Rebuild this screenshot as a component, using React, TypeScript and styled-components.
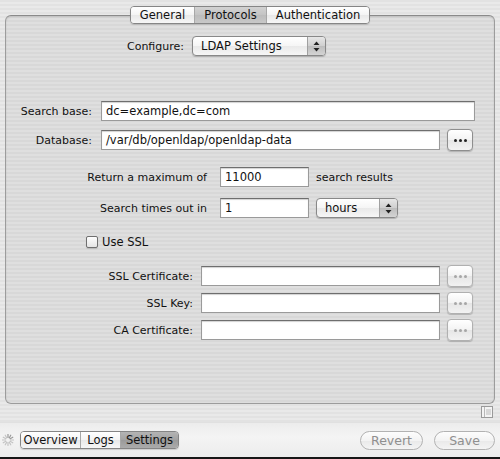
import React from 'react';
import styled, { createGlobalStyle } from 'styled-components';

const GlobalStyle = createGlobalStyle`
  body {
    margin: 0;
    font-family: "DejaVu Sans", "Noto Sans", sans-serif;
    font-size: 11px;
    color: #111;
  }
`;

const stripes = (a: string, b: string) =>
  `repeating-linear-gradient(to bottom, ${a} 0px, ${a} 2px, ${b} 2px, ${b} 4px)`;

const Window = styled.div`
  width: 500px;
  height: 459px;
  box-sizing: border-box;
  display: flex;
  flex-direction: column;
  background: ${stripes('#e2e2e2', '#e9e9e9')};
  border-bottom: 2px solid #161616;
  overflow: hidden;
`;

const Main = styled.div`
  display: flex;
  flex-direction: column;
  height: 422px;
  padding: 6px 5px 0 5px;
  box-sizing: border-box;
`;

const SegmentBar = styled.div`
  display: flex;
  height: 18px;
  box-sizing: border-box;
  border: 1px solid #858585;
  border-radius: 4px;
  overflow: hidden;
  box-shadow: 0 1px 1px rgba(0, 0, 0, 0.15);
  position: relative;
  z-index: 1;
`;

const TopTabs = styled(SegmentBar)`
  align-self: center;
  margin-bottom: -9px;
`;

const Segment = styled.div<{ $w: number; $on?: boolean; $dark?: boolean }>`
  width: ${(p) => p.$w}px;
  box-sizing: border-box;
  display: flex;
  align-items: center;
  justify-content: center;
  font-size: 11.5px;
  color: #111;
  background: ${(p) =>
    p.$on
      ? p.$dark
        ? 'linear-gradient(#b4b4b4, #a2a2a2 50%, #9a9a9a 51%, #ababab)'
        : 'linear-gradient(#d2d2d2, #c4c4c4 50%, #bcbcbc 51%, #c8c8c8)'
      : 'linear-gradient(#ffffff, #f4f4f4 50%, #e8e8e8 51%, #f6f6f6)'};
  & + & {
    border-left: 1px solid #a8a8a8;
  }
`;

const Box = styled.div`
  height: 389px;
  box-sizing: border-box;
  border: 1px solid #9c9c9c;
  border-top-color: #8a8a8a;
  border-radius: 6px;
  background: ${stripes('#d8d8d8', '#dfdfdf')};
  box-shadow: inset 0 1px 2px rgba(0, 0, 0, 0.12);
  padding-top: 19px;
  display: flex;
  flex-direction: column;
`;

const Row = styled.div<{ $mt?: number; $indent?: number }>`
  display: flex;
  align-items: center;
  height: 22px;
  margin-top: ${(p) => p.$mt ?? 0}px;
  padding-left: ${(p) => p.$indent ?? 0}px;
`;

const Label = styled.div<{ $w: number; $gap: number }>`
  width: ${(p) => p.$w}px;
  margin-right: ${(p) => p.$gap}px;
  text-align: right;
  white-space: nowrap;
  font-size: 11px;
`;

const Field = styled.div<{ $w: number }>`
  width: ${(p) => p.$w}px;
  height: 20px;
  box-sizing: border-box;
  background: #fff;
  border: 1px solid #9a9a9a;
  border-top-color: #6e6e6e;
  box-shadow: inset 0 1px 1px rgba(0, 0, 0, 0.18);
  padding: 0 4px;
  display: flex;
  align-items: center;
  font-size: 11.5px;
  white-space: nowrap;
`;

const After = styled.span<{ $gap: number }>`
  margin-left: ${(p) => p.$gap}px;
  font-size: 11px;
`;

const DotsButton = styled.div<{ $disabled?: boolean }>`
  width: 26px;
  height: 22px;
  margin-left: 7px;
  box-sizing: border-box;
  border: 1px solid ${(p) => (p.$disabled ? '#b0b0b0' : '#8e8e8e')};
  border-radius: 4px;
  background: linear-gradient(#ffffff, #f3f3f3 50%, #e6e6e6 51%, #f2f2f2);
  box-shadow: 0 1px 1px rgba(0, 0, 0, 0.2);
  display: flex;
  align-items: center;
  justify-content: center;
  gap: 2px;
`;

const Dot = styled.span<{ $disabled?: boolean }>`
  width: 3px;
  height: 3px;
  border-radius: 50%;
  background: ${(p) => (p.$disabled ? '#a6a6a6' : '#222')};
`;

const Popup = styled.div<{ $w: number; $ml?: number }>`
  width: ${(p) => p.$w}px;
  height: 20px;
  margin-left: ${(p) => p.$ml ?? 0}px;
  box-sizing: border-box;
  border: 1px solid #888;
  border-radius: 4px;
  background: linear-gradient(#ffffff, #f5f5f5 50%, #e9e9e9 51%, #f6f6f6);
  box-shadow: 0 1px 1px rgba(0, 0, 0, 0.2);
  display: flex;
  align-items: stretch;
  overflow: hidden;
  font-size: 11.5px;
`;

const PopupText = styled.div`
  flex: 1;
  display: flex;
  align-items: center;
  padding-left: 8px;
`;

const PopupArrows = styled.div`
  width: 17px;
  border-left: 1px solid #a0a0a0;
  background: linear-gradient(#e6e6e6, #cfcfcf 50%, #bdbdbd 51%, #d4d4d4);
  display: flex;
  align-items: center;
  justify-content: center;
`;

const Checkbox = styled.div`
  width: 12px;
  height: 12px;
  box-sizing: border-box;
  border: 1px solid #6f6f6f;
  border-radius: 2px;
  background: linear-gradient(#fdfdfd, #e4e4e4);
  box-shadow: 0 1px 1px rgba(0, 0, 0, 0.15);
  margin-right: 4px;
`;

const CheckLabel = styled.span`
  font-size: 11.5px;
`;

const ResizeRow = styled.div`
  display: flex;
  justify-content: flex-end;
  padding: 2px 2px 0 0;
`;

const BottomBar = styled.div`
  height: 35px;
  box-sizing: border-box;
  display: flex;
  align-items: center;
  padding: 0 5px 0 2px;
  background: linear-gradient(#ececec, #f4f4f4 40%, #ececec);
  border-top: 1px solid #e0e0e0;
`;

const BottomTabs = styled(SegmentBar)`
  margin-left: 6px;
`;

const Spacer = styled.div`
  flex: 1;
`;

const PillButton = styled.div<{ $w: number; $ml?: number }>`
  width: ${(p) => p.$w}px;
  height: 19px;
  margin-left: ${(p) => p.$ml ?? 0}px;
  box-sizing: border-box;
  border: 1px solid #b2b2b2;
  border-radius: 10px;
  background: linear-gradient(#fdfdfd, #f3f3f3 50%, #e9e9e9 51%, #f4f4f4);
  color: #8f8f8f;
  font-size: 12.5px;
  display: flex;
  align-items: center;
  justify-content: center;
`;

const Arrows = () => (
  <svg width="7" height="11" viewBox="0 0 7 11">
    <path d="M3.5 0.5 L6.5 4 L0.5 4 Z" fill="#222" />
    <path d="M3.5 10.5 L6.5 7 L0.5 7 Z" fill="#222" />
  </svg>
);

const Dots = ({ disabled }: { disabled?: boolean }) => (
  <DotsButton $disabled={disabled}>
    <Dot $disabled={disabled} />
    <Dot $disabled={disabled} />
    <Dot $disabled={disabled} />
  </DotsButton>
);

const Spinner = () => (
  <svg width="12" height="12" viewBox="0 0 12 12">
    {Array.from({ length: 12 }).map((_, i) => {
      const a = (i * Math.PI) / 6;
      const x1 = 6 + Math.cos(a) * 2.5;
      const y1 = 6 + Math.sin(a) * 2.5;
      const x2 = 6 + Math.cos(a) * 5.5;
      const y2 = 6 + Math.sin(a) * 5.5;
      return (
        <line
          key={i}
          x1={x1}
          y1={y1}
          x2={x2}
          y2={y2}
          stroke={i > 8 ? '#9a9a9a' : '#c4c4c4'}
          strokeWidth="1.2"
          strokeLinecap="round"
        />
      );
    })}
  </svg>
);

const DrawerIcon = () => (
  <svg width="12" height="12" viewBox="0 0 12 12">
    <rect x="0.5" y="0.5" width="11" height="11" fill="#f4f4f4" stroke="#9a9a9a" />
    <line x1="3.5" y1="1" x2="3.5" y2="11" stroke="#b8b8b8" />
    <line x1="5" y1="4" x2="10" y2="4" stroke="#bbb" />
    <line x1="5" y1="6" x2="10" y2="6" stroke="#bbb" />
    <line x1="5" y1="8" x2="10" y2="8" stroke="#bbb" />
  </svg>
);

const sslRows = [
  { label: 'SSL Certificate:', mt: 12 },
  { label: 'SSL Key:', mt: 5 },
  { label: 'CA Certificate:', mt: 5 },
];

export default function App() {
  return (
    <>
      <GlobalStyle />
      <Window>
        <Main>
          <TopTabs>
            <Segment $w={63}>General</Segment>
            <Segment $w={72} $on>
              Protocols
            </Segment>
            <Segment $w={103}>Authentication</Segment>
          </TopTabs>
          <Box>
            <Row>
              <Label $w={178} $gap={8}>
                Configure:
              </Label>
              <Popup $w={134}>
                <PopupText>LDAP Settings</PopupText>
                <PopupArrows>
                  <Arrows />
                </PopupArrows>
              </Popup>
            </Row>

            <Row $mt={43}>
              <Label $w={86} $gap={9}>
                Search base:
              </Label>
              <Field $w={374}>dc=example,dc=com</Field>
            </Row>

            <Row $mt={7}>
              <Label $w={86} $gap={9}>
                Database:
              </Label>
              <Field $w={339}>/var/db/openldap/openldap-data</Field>
              <Dots />
            </Row>

            <Row $mt={15}>
              <Label $w={201} $gap={13}>
                Return a maximum of
              </Label>
              <Field $w={89}>11000</Field>
              <After $gap={7}>search results</After>
            </Row>

            <Row $mt={9}>
              <Label $w={201} $gap={13}>
                Search times out in
              </Label>
              <Field $w={89}>1</Field>
              <Popup $w={82} $ml={7}>
                <PopupText>hours</PopupText>
                <PopupArrows>
                  <Arrows />
                </PopupArrows>
              </Popup>
            </Row>

            <Row $mt={12} $indent={80}>
              <Checkbox />
              <CheckLabel>Use SSL</CheckLabel>
            </Row>

            {sslRows.map((r) => (
              <Row key={r.label} $mt={r.mt}>
                <Label $w={187} $gap={8}>
                  {r.label}
                </Label>
                <Field $w={239} />
                <Dots disabled />
              </Row>
            ))}
          </Box>
          <ResizeRow>
            <DrawerIcon />
          </ResizeRow>
        </Main>
        <BottomBar>
          <Spinner />
          <BottomTabs>
            <Segment $w={59}>Overview</Segment>
            <Segment $w={40}>Logs</Segment>
            <Segment $w={58} $on $dark>
              Settings
            </Segment>
          </BottomTabs>
          <Spacer />
          <PillButton $w={63}>Revert</PillButton>
          <PillButton $w={61} $ml={11}>
            Save
          </PillButton>
        </BottomBar>
      </Window>
    </>
  );
}
